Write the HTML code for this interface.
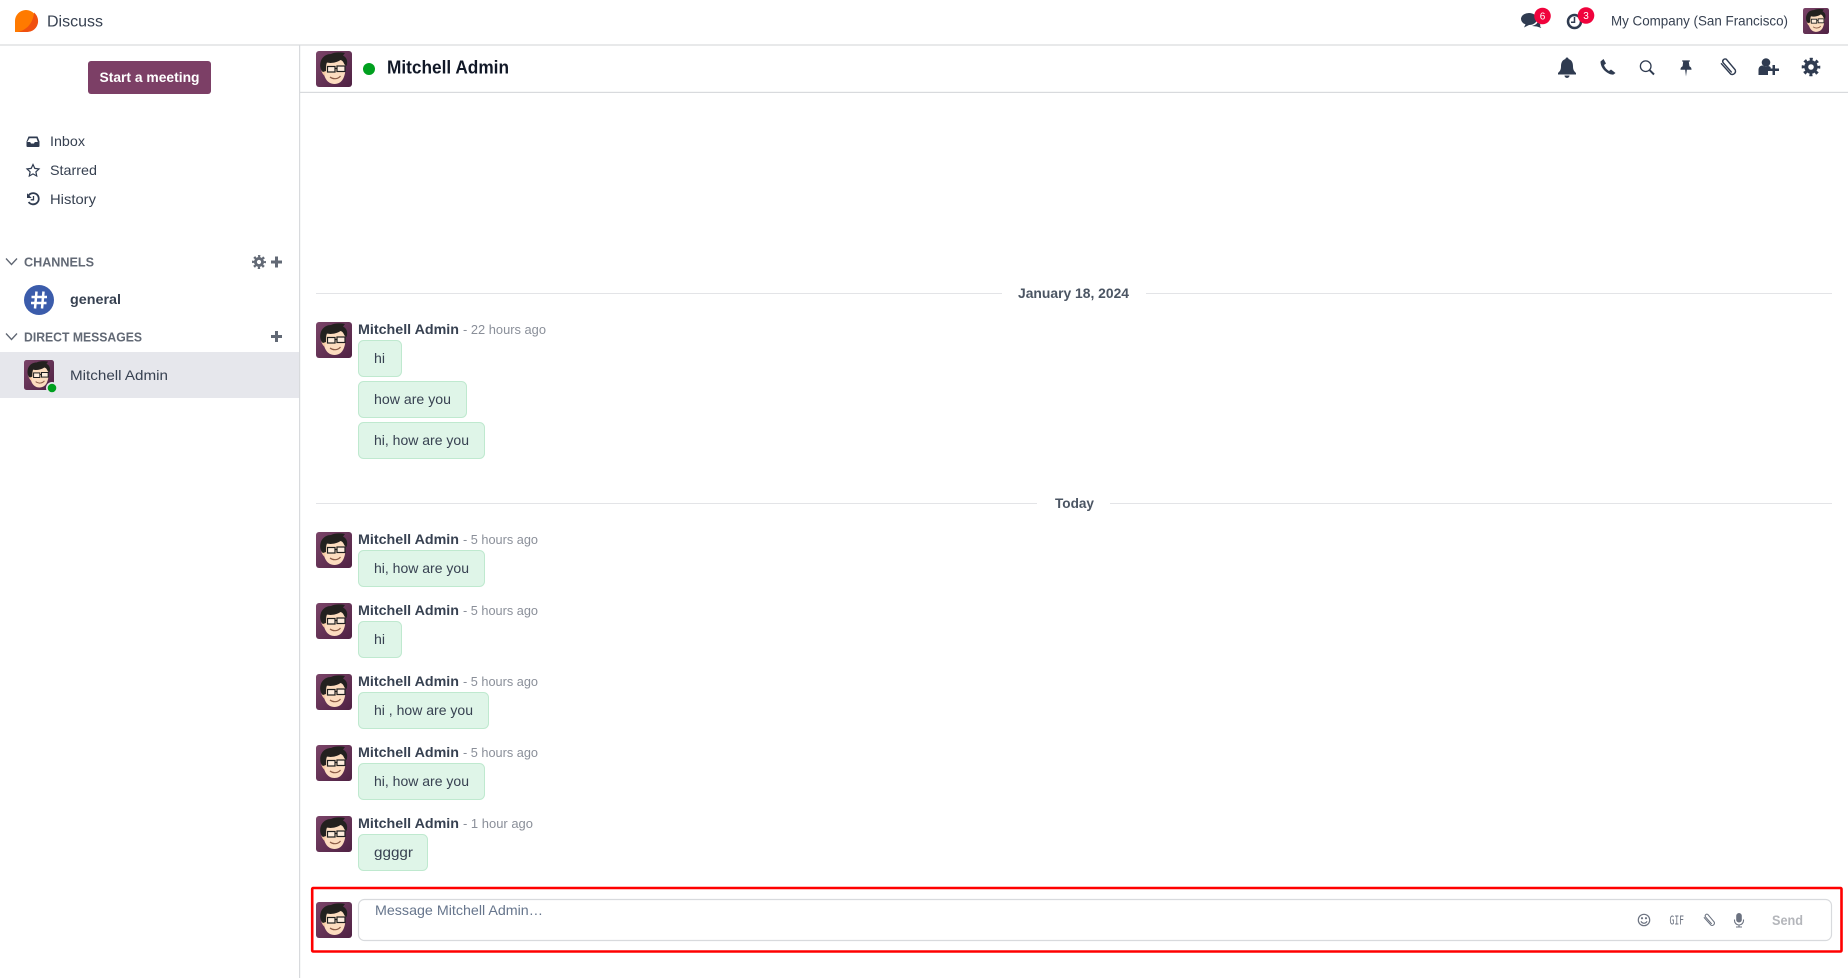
<!DOCTYPE html>
<html lang="en"><head><meta charset="utf-8"><title>Discuss</title>
<style>
html,body{margin:0;padding:0;background:#fff;width:1848px;height:978px;overflow:hidden}
svg{display:block}
text{font-family:"Liberation Sans",sans-serif;font-size:14px;fill:#374151}
.b{font-weight:bold}
.t{fill:#8a8f99;font-size:13px}
.bub{fill:#dff5e8;stroke:#bfe9cf;stroke-width:1}
.ln{stroke:#e3e4e7;stroke-width:1}
.sec{fill:#626975;font-weight:bold;font-size:13px}
.dk{fill:#2f3b50}
.gy{fill:#6b7280}
</style></head><body>
<svg width="1848" height="978" viewBox="0 0 1848 978" xmlns="http://www.w3.org/2000/svg">
<defs>
<linearGradient id="ag" x1="0" y1="0" x2="1" y2="1"><stop offset="0" stop-color="#7a4468"/><stop offset="1" stop-color="#4f2143"/></linearGradient>
<symbol id="av" viewBox="0 0 36 36">
<rect width="36" height="36" rx="3" fill="url(#ag)"/>
<path d="M7 15C7 26 11 33 18.500 33C26 33 29.500 26 29.500 16L28 9H9Z" fill="#fcdcbf"/>
<path d="M5 18C5.500 21 7 24 9 25L10 18Z" fill="#f6c9a4"/>
<path d="M4.500 17C3 9 8 3 15 3C19 1 24 1 29 2L27 4.500C31 6.500 32 10.500 30.500 15L28.500 13.500C27 10 26 9.500 24.500 9C20 12 14 12.500 11 11.500C10 13.500 10 17 10 20L7 21C5.500 20 5 19 4.500 17Z" fill="#23211f"/>
<rect x="11.500" y="15.500" width="7.500" height="5.500" fill="#fff" fill-opacity=".45" stroke="#1e1e1e" stroke-width="1.200"/>
<rect x="21" y="15" width="8" height="5.500" fill="#fff" fill-opacity=".45" stroke="#1e1e1e" stroke-width="1.200"/>
<path d="M19 17.500H21" stroke="#1e1e1e" stroke-width="1.200"/>
<path d="M14 26C17 28.500 22 28.300 24.500 25" fill="none" stroke="#8a5a45" stroke-width="1.200"/>
</symbol>
<symbol id="gear" viewBox="-10 -10 20 20">
<circle r="7.800" fill="none" stroke="currentColor" stroke-width="3" stroke-dasharray="3 3.125" stroke-dashoffset="1.500"/>
<path fill-rule="evenodd" fill="currentColor" d="M0-6.700A6.700 6.700 0 1 1 0 6.700A6.700 6.700 0 1 1 0-6.700ZM0-2.800A2.800 2.800 0 1 0 0 2.800A2.800 2.800 0 1 0 0-2.800Z"/>
</symbol>
<symbol id="clip" viewBox="-10 -10 20 20">
<path d="M-5.500-3.500L3 6A3 3 0 0 0 7 2L-1-7.500A2.200 2.200 0 0 0 -4-4.500L3.500 4" transform="translate(-.5,.5)" fill="none" stroke="currentColor" stroke-width="1.300" stroke-linecap="round"/>
</symbol>
</defs>

<!-- top nav -->
<rect x="0" y="44.400" width="1848" height="1.2" fill="#d8dadd"/>
<path d="M15 32V21A11 11 0 1 1 26 32Z" fill="#ff7a00"/>
<path d="M34 12.500A11 11 0 0 1 26 32H18C26 30 33 24 34 12.500Z" fill="#f0500f"/>
<text x="47" y="26.500" style="font-size:16px" textLength="56" lengthAdjust="spacingAndGlyphs">Discuss</text>

<g class="dk">
<path d="M1521 19a8 6 0 0 1 8-6a8 6 0 0 1 8 6a8 6 0 0 1-8 6l-5 2.500l1.500-3.200a7 6 0 0 1-4.500-5.300z"/>
<path d="M1532 26a9 6 0 0 0 6-5l2.500 4-.5 1 1.300 2-4.500-1.500z"/>
</g>
<circle cx="1542.500" cy="16" r="8.300" fill="#f0033c"/>
<text x="1542.500" y="19.500" text-anchor="middle" style="font-size:10px;fill:#fff">6</text>
<circle cx="1574.500" cy="21.500" r="6.500" fill="none" stroke="#2f3b50" stroke-width="2.500"/>
<path d="M1574.500 17v5.200h-3.500" fill="none" stroke="#2f3b50" stroke-width="1.500"/>
<circle cx="1586" cy="15.500" r="8.300" fill="#f0033c"/>
<text x="1586" y="19" text-anchor="middle" style="font-size:10px;fill:#fff">3</text>
<text x="1611" y="25.500" textLength="177" lengthAdjust="spacingAndGlyphs">My Company (San Francisco)</text>
<use href="#av" x="1803" y="8" width="26" height="26"/>

<!-- sidebar -->
<rect x="299" y="45" width="1.2" height="933" fill="#d8dadd"/>
<rect x="88" y="61" width="123" height="33" rx="3" fill="#7c3f66"/>
<text x="99.500" y="82" class="b" style="fill:#fff" textLength="100" lengthAdjust="spacingAndGlyphs">Start a meeting</text>

<path d="M28.500 136.500h9l2 5v4.500a1 1 0 0 1-1 1h-11a1 1 0 0 1-1-1v-4.500z" fill="#2f3b50"/>
<path d="M29.500 138.300h7l1.300 3.700h-3l-.8 1.500h-3l-.8-1.500h-3z" fill="#fff"/>
<text x="50" y="146" textLength="35" lengthAdjust="spacingAndGlyphs">Inbox</text>
<path d="M33 164.500l1.800 3.900 4.200.5-3.100 2.900.8 4.200-3.700-2.100-3.700 2.100.8-4.200-3.100-2.900 4.200-.5z" fill="none" stroke="#2f3b50" stroke-width="1.200"/>
<text x="50" y="175" textLength="47" lengthAdjust="spacingAndGlyphs">Starred</text>
<path d="M28 196.500a5.600 5.600 0 1 1 .6 5.500" fill="none" stroke="#2f3b50" stroke-width="1.800"/>
<path d="M27 193.300v4.700h4.700z" fill="#2f3b50"/>
<path d="M33.500 196v3.800h-2.800" fill="none" stroke="#2f3b50" stroke-width="1.300"/>
<text x="50" y="204" textLength="46" lengthAdjust="spacingAndGlyphs">History</text>

<path d="M6 258.500l5.500 6 5.500-6" fill="none" stroke="#5f6672" stroke-width="1.300"/>
<text x="24" y="266.500" class="sec" textLength="70" lengthAdjust="spacingAndGlyphs">CHANNELS</text>
<use href="#gear" x="251.500" y="254.500" width="15" height="15" color="#626975"/>
<path d="M275 256.500h3v4h4v3h-4v4h-3v-4h-4v-3h4z" fill="#626975"/>
<circle cx="39" cy="300" r="15" fill="#3b5cab"/>
<path d="M36.500 291.500l-1.500 17M43.500 291.500l-1.500 17M31.500 297h15.500M31 303h15.500" stroke="#fff" stroke-width="2.500" fill="none"/>
<text x="70" y="304" class="b" textLength="51" lengthAdjust="spacingAndGlyphs">general</text>

<path d="M6 333.500l5.500 6 5.500-6" fill="none" stroke="#5f6672" stroke-width="1.300"/>
<text x="24" y="341.500" class="sec" textLength="118" lengthAdjust="spacingAndGlyphs">DIRECT MESSAGES</text>
<path d="M275 331h3v4h4v3h-4v4h-3v-4h-4v-3h4z" fill="#626975"/>
<rect x="0" y="352" width="299" height="46" fill="#e6e7ec"/>
<use href="#av" x="24" y="360" width="30" height="30"/>
<circle cx="52" cy="388" r="6" fill="#e6e7ec"/>
<circle cx="52" cy="388" r="4.300" fill="#00a01f"/>
<text x="70" y="380" textLength="98" lengthAdjust="spacingAndGlyphs">Mitchell Admin</text>

<!-- header -->
<rect x="300" y="91.800" width="1548" height="1.2" fill="#d8dadd"/>
<use href="#av" x="316" y="51" width="36" height="36"/>
<circle cx="369" cy="69" r="6" fill="#00a01f"/>
<text x="387" y="73.500" style="font-size:18px;fill:#111827;font-weight:bold" textLength="122" lengthAdjust="spacingAndGlyphs">Mitchell Admin</text>

<!-- header icons -->
<g transform="translate(1567,67.500)" class="dk"><path d="M0-10a1.500 1.500 0 0 1 1.500 1.500C5-7.500 6-4.500 6-1c0 4 1.700 5 3 6.500V7H-9V5.500C-7.700 4-6 3-6-1c0-3.500 1-6.500 4.500-7.500A1.500 1.500 0 0 1 0-10zM-2.500 8h5a2.500 2.500 0 0 1-5 0z"/></g>
<g transform="translate(1608,67)" class="dk"><path d="M-7.500-5.500L-4.500-8l2.500 4.500-2 1.500c.8 2.500 2.500 4.500 5 6l2-1.500L7.500 6 5.500 7.500C2 8.500-7.500 3-7.500-5.500z"/></g>
<g transform="translate(1647,67.500)" fill="none" stroke="#2f3b50"><circle cx="-1.300" cy="-1.300" r="5.300" stroke-width="1.300"/><path d="M2.700 2.700L7 7" stroke-width="2"/></g>
<g transform="translate(1686,68) scale(.85)" class="dk"><path d="M-4.500-9H4.500V-7.500H3.300L4-2C6-1 6.500 .5 6.500 2H1L0 10-1 2H-6.500C-6.500 .5-6-1-4-2L-3.300-7.500H-4.500Z"/></g>
<use href="#clip" x="1717" y="56" width="22" height="22" color="#2f3b50"/>
<g transform="translate(1769,67)" class="dk"><circle cx="-3" cy="-4.500" r="4.300"/><path d="M-10.500 8V3c0-3 2-4.500 4-4.500 2 1.500 4.500 1.500 6 .5 1 .3 1.800 .8 2.200 1.500V4H-1V8Z"/><path d="M3.500-2h2.500v3.500H10V4H6V8H3.500V4H-.5V1.500h4z"/></g>
<use href="#gear" x="1801" y="57" width="20" height="20" color="#2f3b50"/>

<!-- January -->
<line class="ln" x1="316" y1="293.500" x2="1002" y2="293.500"/>
<line class="ln" x1="1146" y1="293.500" x2="1832" y2="293.500"/>
<text x="1018" y="298" class="b" style="fill:#4b5563" textLength="111" lengthAdjust="spacingAndGlyphs">January 18, 2024</text>

<use href="#av" x="316" y="322" width="36" height="36"/>
<text x="358" y="334" class="b" textLength="101" lengthAdjust="spacingAndGlyphs">Mitchell Admin</text>
<text x="463" y="334" class="t" textLength="83" lengthAdjust="spacingAndGlyphs">- 22 hours ago</text>
<rect class="bub" x="358.500" y="340.500" width="43" height="36" rx="5"/>
<text x="374" y="363" textLength="11" lengthAdjust="spacingAndGlyphs">hi</text>
<rect class="bub" x="358.500" y="381.500" width="108" height="36" rx="5"/>
<text x="374" y="404" textLength="77" lengthAdjust="spacingAndGlyphs">how are you</text>
<rect class="bub" x="358.500" y="422.500" width="126" height="36" rx="5"/>
<text x="374" y="445" textLength="95" lengthAdjust="spacingAndGlyphs">hi, how are you</text>

<!-- Today -->
<line class="ln" x1="316" y1="503.500" x2="1037" y2="503.500"/>
<line class="ln" x1="1110" y1="503.500" x2="1832" y2="503.500"/>
<text x="1055" y="508" class="b" style="fill:#4b5563" textLength="39" lengthAdjust="spacingAndGlyphs">Today</text>

<use href="#av" x="316" y="532" width="36" height="36"/>
<text x="358" y="544" class="b" textLength="101" lengthAdjust="spacingAndGlyphs">Mitchell Admin</text>
<text x="463" y="544" class="t" textLength="75" lengthAdjust="spacingAndGlyphs">- 5 hours ago</text>
<rect class="bub" x="358.500" y="550.500" width="126" height="36" rx="5"/>
<text x="374" y="573" textLength="95" lengthAdjust="spacingAndGlyphs">hi, how are you</text>

<use href="#av" x="316" y="603" width="36" height="36"/>
<text x="358" y="615" class="b" textLength="101" lengthAdjust="spacingAndGlyphs">Mitchell Admin</text>
<text x="463" y="615" class="t" textLength="75" lengthAdjust="spacingAndGlyphs">- 5 hours ago</text>
<rect class="bub" x="358.500" y="621.500" width="43" height="36" rx="5"/>
<text x="374" y="644" textLength="11" lengthAdjust="spacingAndGlyphs">hi</text>

<use href="#av" x="316" y="674" width="36" height="36"/>
<text x="358" y="686" class="b" textLength="101" lengthAdjust="spacingAndGlyphs">Mitchell Admin</text>
<text x="463" y="686" class="t" textLength="75" lengthAdjust="spacingAndGlyphs">- 5 hours ago</text>
<rect class="bub" x="358.500" y="692.500" width="130" height="36" rx="5"/>
<text x="374" y="715" textLength="99" lengthAdjust="spacingAndGlyphs">hi , how are you</text>

<use href="#av" x="316" y="745" width="36" height="36"/>
<text x="358" y="757" class="b" textLength="101" lengthAdjust="spacingAndGlyphs">Mitchell Admin</text>
<text x="463" y="757" class="t" textLength="75" lengthAdjust="spacingAndGlyphs">- 5 hours ago</text>
<rect class="bub" x="358.500" y="763.500" width="126" height="36" rx="5"/>
<text x="374" y="786" textLength="95" lengthAdjust="spacingAndGlyphs">hi, how are you</text>

<use href="#av" x="316" y="816" width="36" height="36"/>
<text x="358" y="828" class="b" textLength="101" lengthAdjust="spacingAndGlyphs">Mitchell Admin</text>
<text x="463" y="828" class="t" textLength="70" lengthAdjust="spacingAndGlyphs">- 1 hour ago</text>
<rect class="bub" x="358.500" y="834.500" width="69" height="36" rx="5"/>
<text x="374" y="857" textLength="39" lengthAdjust="spacingAndGlyphs">ggggr</text>

<!-- composer -->
<rect x="312.200" y="888" width="1529.300" height="63.500" rx="1" fill="none" stroke="#ff0000" stroke-width="2.600"/>
<use href="#av" x="316" y="902" width="36" height="36"/>
<rect x="358.500" y="899.500" width="1473" height="41" rx="6" fill="#fff" stroke="#d8dadd" stroke-width="1.200"/>
<text x="375" y="915" style="fill:#66758c" textLength="168" lengthAdjust="spacingAndGlyphs">Message Mitchell Admin…</text>
<g transform="translate(1644,920)" fill="none" stroke="#6b7280" stroke-width="1.200"><circle r="5.700"/><path d="M-3 1.300a3.300 3.300 0 0 0 6 0"/><circle cx="-2" cy="-1.800" r=".5"/><circle cx="2" cy="-1.800" r=".5"/></g>
<text x="1669.500" y="924.500" style="font-family:'DejaVu Sans Mono',monospace;font-size:12px;fill:#6b7280" textLength="14.500" lengthAdjust="spacingAndGlyphs">GIF</text>
<use href="#clip" x="1701" y="912" width="16" height="16" color="#6b7280"/>
<g transform="translate(1739,920)"><rect x="-2.800" y="-7" width="5.600" height="9.500" rx="2.800" fill="#6b7280"/><path d="M-4.500-.5V.5a4.500 4.500 0 0 0 9 0V-.5M0 5V7M-3 7H3" fill="none" stroke="#6b7280" stroke-width="1.100"/></g>
<text x="1772" y="925" class="b" style="fill:#b4b6bb" textLength="31" lengthAdjust="spacingAndGlyphs">Send</text>
</svg>
</body></html>
